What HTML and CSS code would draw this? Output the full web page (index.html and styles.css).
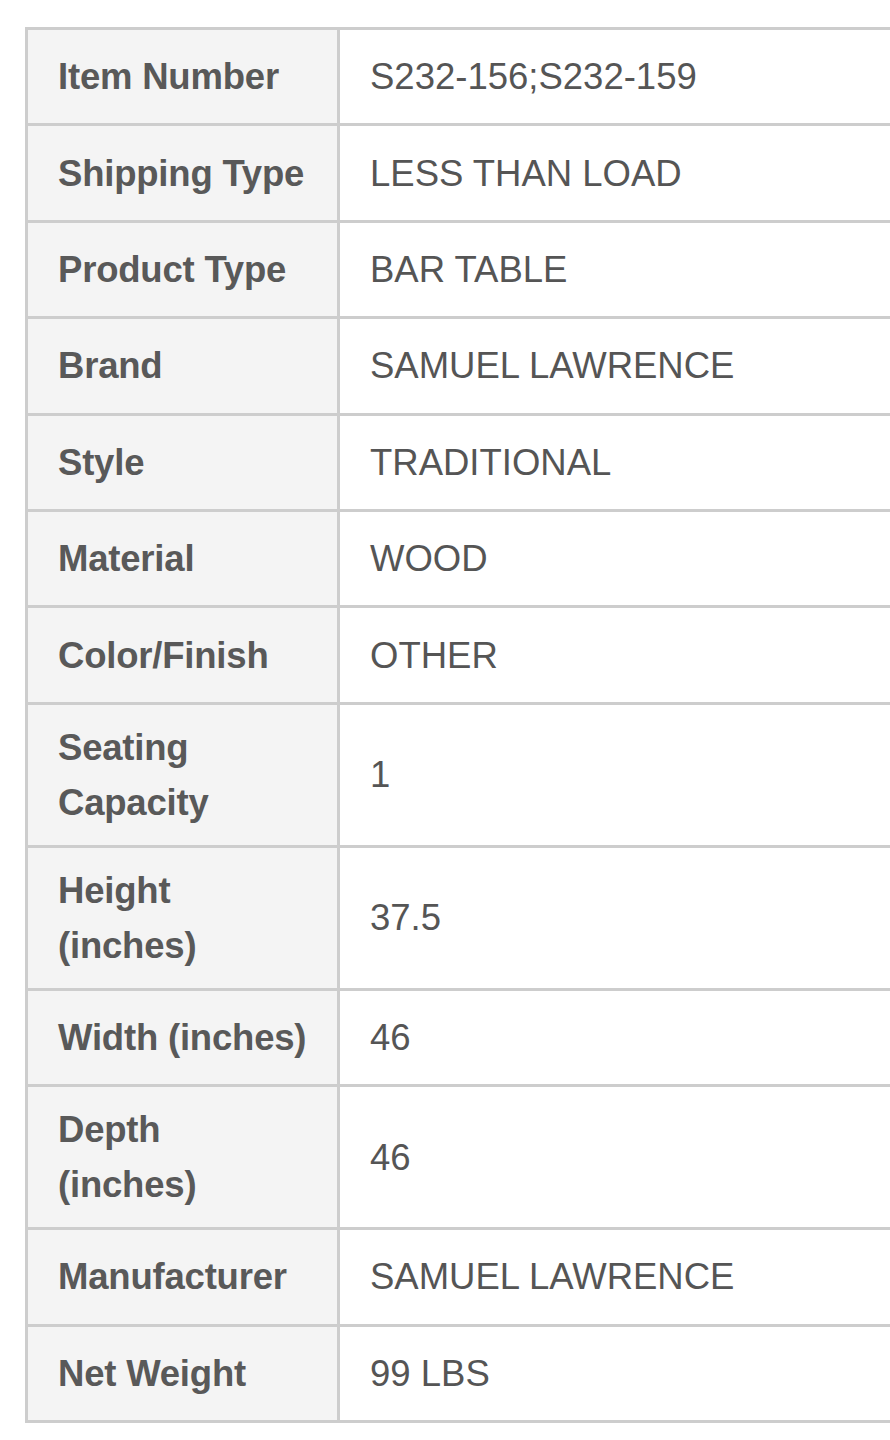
FILE: index.html
```html
<!DOCTYPE html>
<html>
<head>
<meta charset="utf-8">
<link rel="stylesheet" href="styles.css">
</head>
<body>
<table class="specs">
  <colgroup>
    <col class="col-label">
    <col class="col-value">
  </colgroup>
  <tbody>
    <tr><th>Item Number</th><td>S232-156;S232-159</td></tr>
    <tr><th>Shipping Type</th><td>LESS THAN LOAD</td></tr>
    <tr><th>Product Type</th><td>BAR TABLE</td></tr>
    <tr><th>Brand</th><td>SAMUEL LAWRENCE</td></tr>
    <tr><th>Style</th><td>TRADITIONAL</td></tr>
    <tr><th>Material</th><td>WOOD</td></tr>
    <tr><th>Color/Finish</th><td>OTHER</td></tr>
    <tr><th>Seating<br>Capacity</th><td>1</td></tr>
    <tr><th>Height<br>(inches)</th><td>37.5</td></tr>
    <tr><th>Width (inches)</th><td>46</td></tr>
    <tr><th>Depth<br>(inches)</th><td>46</td></tr>
    <tr><th>Manufacturer</th><td>SAMUEL LAWRENCE</td></tr>
    <tr><th>Net Weight</th><td>99 LBS</td></tr>
  </tbody>
</table>
</body>
</html>
```

FILE: styles.css
```css
html, body {
  margin: 0;
  padding: 0;
  background: #ffffff;
  overflow: hidden;
}

.specs {
  margin: 27px 0 0 25px;
  border-collapse: collapse;
  table-layout: fixed;
  width: 900px;
  font-family: "Liberation Sans", Arial, sans-serif;
  font-size: 36.5px;
  line-height: 55px;
  color: #555555;
}

.col-label {
  width: 312px;
}

.specs th,
.specs td {
  border: 3px solid #cdcdcd;
  padding: 15px 30px;
  height: 63.4px;
  vertical-align: middle;
  text-align: left;
  white-space: nowrap;
}

.specs th {
  background: #f4f4f4;
  font-weight: bold;
  color: #595959;
  letter-spacing: -0.2px;
}

.specs td {
  background: #ffffff;
  font-weight: normal;
}
```
